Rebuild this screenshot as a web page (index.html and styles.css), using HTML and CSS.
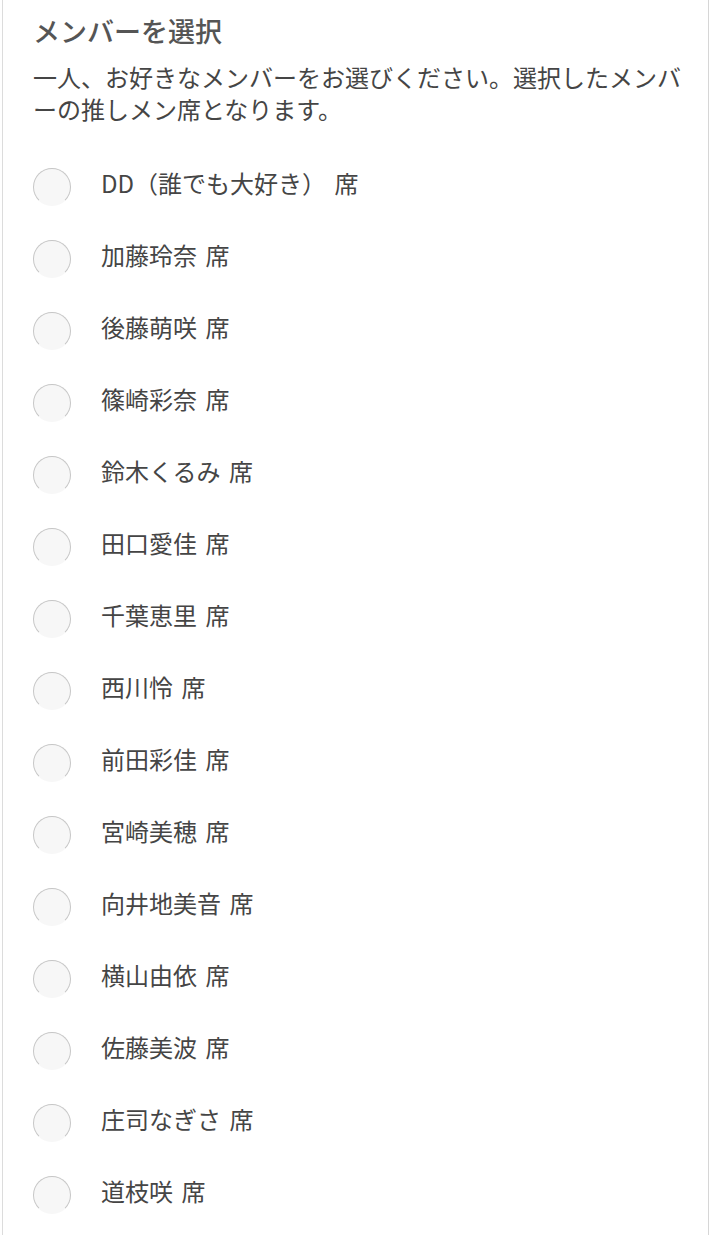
FILE: index.html
```html
<!DOCTYPE html>
<html lang="ja">
<head>
  <meta charset="UTF-8">
  <title>メンバーを選択</title>
  <link rel="stylesheet" href="styles.css">
</head>
<body>
  <div class="panel">
    <h2>メンバーを選択</h2>
    <p class="lead">一人、お好きなメンバーをお選びください。選択したメンバーの推しメン席となります。</p>

    <ul class="members">
      <li><label><span class="radio"></span>DD（誰でも大好き） 席</label></li>
      <li><label><span class="radio"></span>加藤玲奈 席</label></li>
      <li><label><span class="radio"></span>後藤萌咲 席</label></li>
      <li><label><span class="radio"></span>篠崎彩奈 席</label></li>
      <li><label><span class="radio"></span>鈴木くるみ 席</label></li>
      <li><label><span class="radio"></span>田口愛佳 席</label></li>
      <li><label><span class="radio"></span>千葉恵里 席</label></li>
      <li><label><span class="radio"></span>西川怜 席</label></li>
      <li><label><span class="radio"></span>前田彩佳 席</label></li>
      <li><label><span class="radio"></span>宮崎美穂 席</label></li>
      <li><label><span class="radio"></span>向井地美音 席</label></li>
      <li><label><span class="radio"></span>横山由依 席</label></li>
      <li><label><span class="radio"></span>佐藤美波 席</label></li>
      <li><label><span class="radio"></span>庄司なぎさ 席</label></li>
      <li><label><span class="radio"></span>道枝咲 席</label></li>
    </ul>
  </div>
</body>
</html>
```

FILE: styles.css
```css
body {
  margin: 0;
  font-family: "Noto Sans CJK JP", "Noto Sans", sans-serif;
  background-color: #fff;
  color: #454545;
}
.panel {
  margin-left: 2px;
  width: 707px;
  min-height: 1300px;
  padding: 13px 20px 0 30px;
  box-sizing: border-box;
  border-left: 1px solid #dcdcdc;
  border-right: 1px solid #d6d6d6;
}
h2 {
  margin: 0;
  font-size: 27px;
  line-height: 36px;
  font-weight: 500;
  color: #555;
}
.lead {
  margin: 12px 0 21px;
  font-size: 24px;
  line-height: 32px;
}
.members {
  list-style: none;
  margin: 0;
  padding: 0;
}
.members li {
  height: 72px;
}
.members label {
  display: flex;
  align-items: center;
  height: 100%;
  font-size: 24px;
  word-spacing: 3px;
  gap: 30px;
}
.radio {
  width: 38px;
  height: 38px;
  margin-top: 9px;
  flex: none;
  box-sizing: border-box;
  border-radius: 50%;
  border: 1px solid #c6c6c6;
  border-bottom-color: transparent;
  background-color: #f7f7f7;
}
```
